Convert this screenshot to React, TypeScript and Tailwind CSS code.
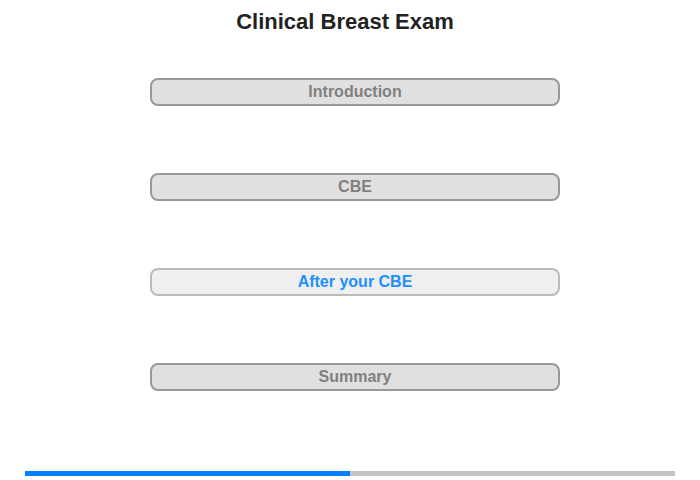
import React from 'react';

const sections = [
  { id: 1, label: 'Introduction', active: false },
  { id: 2, label: 'CBE', active: false },
  { id: 3, label: 'After your CBE', active: true },
  { id: 4, label: 'Summary', active: false },
];

const SectionButton: React.FC<{ label: string; active: boolean }> = ({ label, active }) => (
  <button
    className={
      active
        ? 'w-[410px] h-[28px] rounded-[8px] border-2 border-[#bbbbbb] bg-[#efefef] text-[#1e90ff] text-[16px] font-bold leading-none'
        : 'w-[410px] h-[28px] rounded-[8px] border-2 border-[#999999] bg-[#e0e0e0] text-[#808080] text-[16px] font-bold leading-none'
    }
  >
    {label}
  </button>
);

export default function App() {
  return (
    <div className="w-[700px] h-[480px] bg-white flex flex-col" style={{ fontFamily: '"Liberation Sans", Arial, sans-serif' }}>
      <h1 className="w-[690px] pt-[9px] text-center text-[22px] font-bold text-[#222222] leading-[26px]">
        Clinical Breast Exam
      </h1>
      <div className="flex flex-col gap-[67px] pl-[150px] mt-[43px]">
        {sections.map(s => (
          <SectionButton key={s.id} label={s.label} active={s.active} />
        ))}
      </div>
      <div className="mt-[80px] ml-[25px] w-[650px] h-[5px] bg-[#c4c4c4] flex">
        <div className="w-[325px] h-full bg-[#0080ff]" />
      </div>
    </div>
  );
}
